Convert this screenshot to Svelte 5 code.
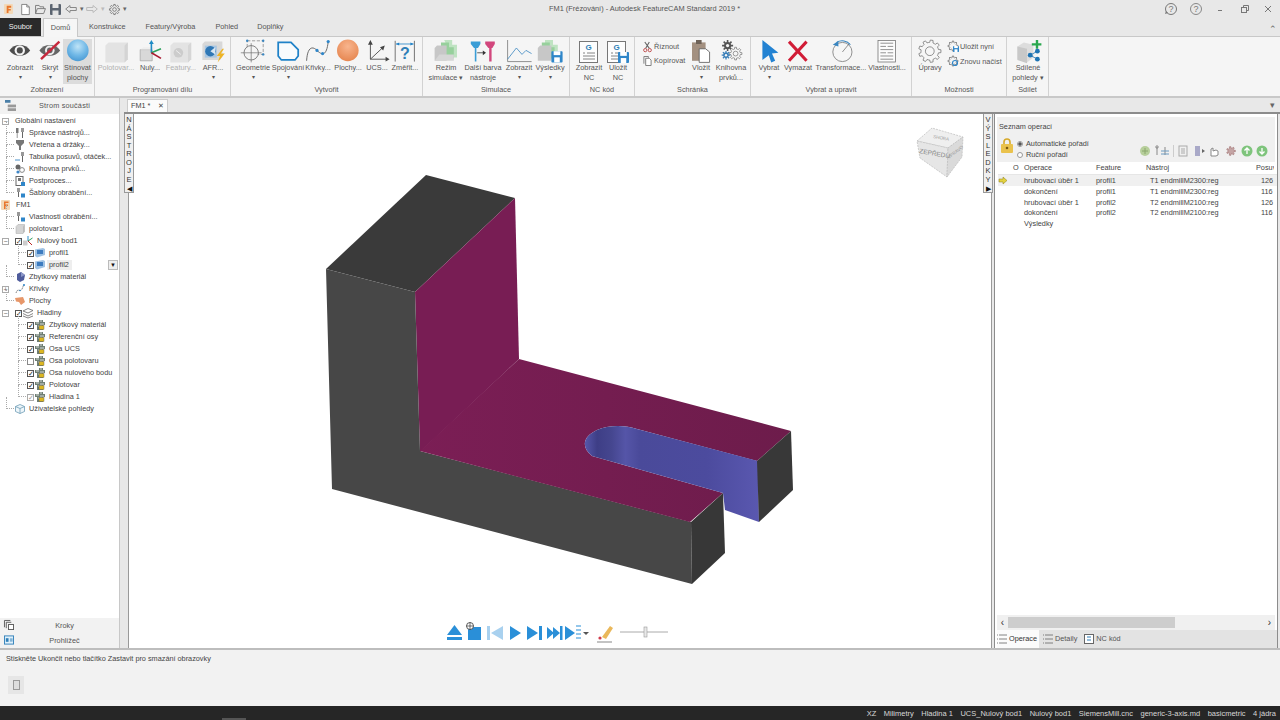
<script>
  function gear(cx, cy, ro, ri, n) {
    let d = '';
    const step = (Math.PI * 2) / n;
    for (let i = 0; i < n; i++) {
      const a = i * step;
      const pts = [[ri, a - step * 0.5], [ri, a - step * 0.28], [ro, a - step * 0.18], [ro, a + step * 0.18], [ri, a + step * 0.28]];
      for (const [r, t] of pts) {
        d += (d ? 'L' : 'M') + (cx + r * Math.cos(t)).toFixed(1) + ' ' + (cy + r * Math.sin(t)).toFixed(1);
      }
    }
    return d + 'Z';
  }

  const tree = [
    { kind: 'root', exp: '−', label: 'Globální nastavení' },
    { kind: 'child', icon: 'tool', label: 'Správce nástrojů...' },
    { kind: 'child', icon: 'spindle', label: 'Vřetena a držáky...' },
    { kind: 'child', icon: 'feed', label: 'Tabulka posuvů, otáček...' },
    { kind: 'child', icon: 'lib', label: 'Knihovna prvků...' },
    { kind: 'child', icon: 'post', label: 'Postproces...' },
    { kind: 'child', icon: 'tmpl', label: 'Šablony obrábění...' },
    { kind: 'fm', icon: 'fm', label: 'FM1' },
    { kind: 'child', icon: 'tmpl', label: 'Vlastnosti obrábění...' },
    { kind: 'child', icon: 'stock', label: 'polotovar1' },
    { kind: 'root', exp: '−', check: 'on', icon: 'zero', label: 'Nulový bod1' },
    { kind: 'sub', check: 'on', icon: 'feature', label: 'profil1' },
    { kind: 'sub', check: 'on', icon: 'feature', label: 'profil2', selected: true },
    { kind: 'child', icon: 'rest', label: 'Zbytkový materiál' },
    { kind: 'root', exp: '+', icon: 'curve', label: 'Křivky' },
    { kind: 'child', icon: 'surf', label: 'Plochy' },
    { kind: 'root', exp: '−', check: 'on', icon: 'layers', label: 'Hladiny' },
    { kind: 'sub', check: 'on', icon: 'layer', label: 'Zbytkový materiál' },
    { kind: 'sub', check: 'on', icon: 'layer', label: 'Referenční osy' },
    { kind: 'sub', check: 'on', icon: 'layer', label: 'Osa UCS' },
    { kind: 'sub', check: 'off', icon: 'layer', label: 'Osa polotovaru' },
    { kind: 'sub', check: 'on', icon: 'layer', label: 'Osa nulového bodu' },
    { kind: 'sub', check: 'on', icon: 'layer', label: 'Polotovar' },
    { kind: 'sub', check: 'dim', icon: 'layer', label: 'Hladina 1' },
    { kind: 'child', icon: 'views', label: 'Uživatelské pohledy' }
  ];

  const ops = [
    { op: 'hrubovací úběr 1', f: 'profil1', t: 'T1 endmillM2300:reg', p: '126', cur: true },
    { op: 'dokončení', f: 'profil1', t: 'T1 endmillM2300:reg', p: '116' },
    { op: 'hrubovací úběr 1', f: 'profil2', t: 'T2 endmillM2100:reg', p: '126' },
    { op: 'dokončení', f: 'profil2', t: 'T2 endmillM2100:reg', p: '116' },
    { op: 'Výsledky', f: '', t: '', p: '' }
  ];

  const status = ['XZ', 'Milimetry', 'Hladina 1', 'UCS_Nulový bod1', 'Nulový bod1', 'SiemensMill.cnc', 'generic-3-axis.md', 'basicmetric', '4 jádra'];
  const nastroje = 'NÁSTROJE'.split('');
  const vysledky = 'VÝSLEDKY'.split('');
</script>

{#snippet ticon(name)}
  <svg class="ti" viewBox="0 0 10 10">
    {#if name === 'tool'}
      <rect x="1" y="0" width="2.5" height="5" fill="#777" /><rect x="1.7" y="5" width="1" height="5" fill="#999" /><rect x="6" y="0" width="3" height="4" fill="#999" /><rect x="7" y="4" width="1" height="6" fill="#666" />
    {:else if name === 'spindle'}
      <path d="M1 0h8v3L6 6v4H4V6L1 3z" fill="#777" />
    {:else if name === 'feed'}
      <path d="M0 8h5" stroke="#4a90c8" /><rect x="6" y="0" width="3" height="4" fill="#999" /><rect x="7" y="4" width="1" height="6" fill="#666" />
    {:else if name === 'lib'}
      <circle cx="3" cy="3" r="2.5" fill="#666" /><circle cx="7" cy="6" r="2.4" fill="none" stroke="#888" /><circle cx="3" cy="8" r="1.6" fill="#3d85c6" />
    {:else if name === 'post'}
      <rect x="1" y="0.5" width="7" height="9" fill="#fff" stroke="#666" /><rect x="3" y="2" width="3" height="3" fill="#777" /><rect x="6" y="6" width="4" height="4" fill="#2f86c9" />
    {:else if name === 'tmpl'}
      <rect x="2" y="0" width="3" height="4" fill="#999" /><rect x="3" y="4" width="1" height="5" fill="#666" /><rect x="6" y="5.5" width="4" height="4" fill="#2f86c9" />
    {:else if name === 'fm'}
      <rect x="0" y="0" width="9" height="10" rx="1" fill="#f3d9b8" /><path d="M3 1.500h4.500v1.500H4.500v1.500H7V6H4.500v3H3z" fill="#e8762d" />
    {:else if name === 'stock'}
      <path d="M1 2.500 3 .5h6.500v7L8 9.500H1z" fill="#d4d4d4" stroke="#aaa" stroke-width=".5" /><path d="M8 2.500 9.500 .5v7L8 9.500z" fill="#bbb" />
    {:else if name === 'zero'}
      <path d="M0 4.500h4.500v5H0z" fill="#ccc" /><path d="M5 5V0" stroke="#2a8ac7" /><path d="M5 5 9.500 2" stroke="#2ca25f" /><path d="M5 5l4 4" stroke="#b22" />
    {:else if name === 'feature'}
      <path d="M0 1.500 8 0l2 1v6L2 9.500 0 8z" fill="#9fc2e4" /><path d="M2 2h6v4H2z" fill="#3d7cc0" />
    {:else if name === 'rest'}
      <path d="M2 2 6 0l4 3-1 5-4 2-3-2z" fill="#4f5c9c" /><path d="M6 0l4 3-4 2z" fill="#8c97c8" />
    {:else if name === 'curve'}
      <path d="M1 9C3 3 5 9 7 5S8 1 9 1" fill="none" stroke="#555" stroke-width=".7" stroke-dasharray="1.500 .5" /><circle cx="9" cy="1" r="1" fill="#2f86c9" /><circle cx="5" cy="6.500" r=".8" fill="#2f86c9" />
    {:else if name === 'surf'}
      <path d="M0 2 8 1l2 5-4 3-2-3-3-.5z" fill="#e7976a" />
    {:else if name === 'layers'}
      <path d="M0 3 5 .5 10 2.500 5 5zM0 5.500 5 8l5-2.500M0 8l5 2 5-2" fill="none" stroke="#666" stroke-width=".8" />
    {:else if name === 'layer'}
      <path d="M0 2h4V0h4v2h2v3H8v5H2V5H0z" fill="#6f7f74" /><path d="M1 3h3M5 1h2M5 4h4M3 6h4" stroke="#fff" stroke-width=".7" /><rect x="4" y="5.500" width="5" height="4" fill="#dcb722" stroke="#555" stroke-width=".4" />
    {:else if name === 'views'}
      <path d="M5 .5 9.500 2.500v5L5 9.500.5 7.500v-5z" fill="#eef6fa" stroke="#6c9cb5" stroke-width=".8" /><path d="M.5 2.500 5 4.500l4.500-2M5 4.500v5" fill="none" stroke="#6c9cb5" stroke-width=".8" />
    {/if}
  </svg>
{/snippet}

{#snippet floppy(x, y, s)}
  <g transform="translate({x} {y}) scale({s})">
    <rect width="10" height="10" rx=".8" fill="#2f86c9" /><rect x="2" y="0" width="6" height="3.500" fill="#fff" /><rect x="2.500" y="5.500" width="5" height="4.500" fill="#fff" />
  </g>
{/snippet}

{#snippet docG(x, y)}
  <g transform="translate({x} {y})">
    <rect x=".5" y=".5" width="18" height="21" fill="#fdfdfd" stroke="#777" /><text x="9.500" y="9" class="g">G</text><path d="M4 12h2M8 12h8M4 15h12M4 18h12" stroke="#666" stroke-width=".8" />
  </g>
{/snippet}

<div class="app">
  <header class="titlebar">
    <div class="qat">
      <svg class="q-logo" viewBox="0 0 10 11"><rect width="10" height="11" rx="1" fill="#f3d9b8" /><path d="M3 2h5v2H5v1.500h2.500v1.800H5V10H3z" fill="#e8762d" /></svg>
      <svg class="q-new" viewBox="0 0 10 13"><path d="M.5.5h6l3 3v9h-9z" fill="#fff" stroke="#777" /><path d="M6.500.5v3h3" fill="none" stroke="#777" /></svg>
      <svg class="q-open" viewBox="0 0 12 10"><path d="M.5 9.500v-9h4l1 1.500h4v2M.5 9.500 2.500 4h9l-2 5.500z" fill="none" stroke="#777" /></svg>
      <svg class="q-save" viewBox="0 0 11 11"><rect width="11" height="11" rx="1" fill="#5b6470" /><rect x="2.500" width="6" height="4" fill="#e4e4e4" /><rect x="2.500" y="6.500" width="6" height="4.500" fill="#e4e4e4" /></svg>
      <svg class="q-undo" viewBox="0 0 12 8"><path d="M5 .5.7 4 5 7.500V5.500h6.300v-3H5z" fill="none" stroke="#888" /></svg>
      <span class="q-drop">▾</span>
      <svg class="q-redo" viewBox="0 0 12 8"><path d="M7 .5 11.300 4 7 7.500V5.500H.7v-3H7z" fill="none" stroke="#bbb" /></svg>
      <span class="q-drop pale">▾</span>
      <svg class="q-gear" viewBox="0 0 12 12"><path d={gear(6, 6, 5.6, 4.2, 8)} fill="none" stroke="#666" stroke-width=".8" /><circle cx="6" cy="6" r="2" fill="none" stroke="#666" stroke-width=".8" /></svg>
      <span class="q-drop">▾</span>
    </div>
    <div class="title">FM1 (Frézování) - Autodesk FeatureCAM Standard 2019 *</div>
    <div class="winctl">
      <svg class="w-help" viewBox="0 0 12 12"><circle cx="6" cy="6" r="5.500" fill="none" stroke="#777" /><text x="6" y="9" class="hq">?</text><path d="M1 8l-1 3 3-1z" fill="#777" /></svg>
      <svg class="w-help" viewBox="0 0 12 12"><circle cx="6" cy="6" r="5.500" fill="none" stroke="#888" /><text x="6" y="9" class="hq">?</text></svg>
      <span class="w-min"></span>
      <svg class="w-res" viewBox="0 0 8 8"><rect x=".5" y="2.500" width="5" height="5" fill="#e8e8e8" stroke="#777" /><path d="M2.500 2.500v-2h5v5h-2" fill="none" stroke="#777" /></svg>
      <svg class="w-close" viewBox="0 0 8 8"><path d="M1 1l6 6M7 1 1 7" stroke="#777" /></svg>
    </div>
  </header>

  <nav class="tabs">
    <span class="tab file">Soubor</span>
    <span class="tab active">Domů</span>
    <span class="tab t-kon">Konstrukce</span>
    <span class="tab t-fea">Featury/Výroba</span>
    <span class="tab t-poh">Pohled</span>
    <span class="tab t-dop">Doplňky</span>
    <span class="collapse">⌃</span>
  </nav>

  <section class="ribbon">
    <div class="group g-view">
      <div class="items">
        <div class="it">
          <svg class="ic" viewBox="0 0 32 28"><path d="M3 13C9 4 23 4 29 13 23 22 9 22 3 13z" fill="#4d4d4d" /><circle cx="16" cy="13" r="6.500" fill="#f4f4f4" /><circle cx="16" cy="13" r="3.800" fill="#4d4d4d" /></svg>
          <span class="lb">Zobrazit</span><span class="ar">▾</span>
        </div>
        <div class="it">
          <svg class="ic" viewBox="0 0 32 28"><path d="M3 13C9 4 23 4 29 13 23 22 9 22 3 13z" fill="#666" /><circle cx="16" cy="13" r="6" fill="#eee" /><circle cx="16" cy="13" r="3.500" fill="#666" /><path d="M5 24 28 2" stroke="#c7283c" stroke-width="3" /></svg>
          <span class="lb">Skrýt</span><span class="ar">▾</span>
        </div>
        <div class="it sel">
          <svg class="ic" viewBox="0 0 32 28"><defs><radialGradient id="bl" cx=".5" cy=".32" r=".7"><stop offset="0" stop-color="#bfe4f7" /><stop offset=".6" stop-color="#6fb7e6" /><stop offset="1" stop-color="#4a9ad4" /></radialGradient><radialGradient id="or" cx=".5" cy=".32" r=".7"><stop offset="0" stop-color="#f8b58e" /><stop offset="1" stop-color="#e68650" /></radialGradient></defs><circle cx="16" cy="13" r="13.500" fill="url(#bl)" /></svg>
          <span class="lb">Stínovat</span><span class="lb">plochy</span>
        </div>
      </div>
      <div class="glabel">Zobrazení</div>
    </div>

    <div class="group g-prog">
      <div class="items">
        <div class="it dim">
          <svg class="ic" viewBox="0 0 32 28"><path d="M3 7l4-4h24v21l-4 4H3z" fill="#e3e3e3" /><path d="M27 7l4-4v21l-4 4z" fill="#d4d4d4" /></svg>
          <span class="lb">Polotovar...</span>
        </div>
        <div class="it">
          <svg class="ic" viewBox="0 0 32 28"><path d="M4 12h15v14H4z" fill="#d8d8d8" stroke="#aaa" /><path d="M4 12l4-3h14v3z" fill="#eee" /><path d="M18 16V3" stroke="#1e8ac5" stroke-width="2" /><path d="M15 5l3-5 3 5z" fill="#1e8ac5" /><path d="M18 16 30 11" stroke="#2ca25f" stroke-width="2" /><path d="M18 16l12 7" stroke="#a8182f" stroke-width="2" /></svg>
          <span class="lb">Nuly...</span>
        </div>
        <div class="it dim">
          <svg class="ic" viewBox="0 0 32 28"><path d="M3 7l4-4h22v21l-4 4H3z" fill="#e3e3e3" /><path d="M25 7l4-4v21l-4 4z" fill="#d6d6d6" /><circle cx="13" cy="16" r="6" fill="#ccc" /><path d="M10 13l6 5" stroke="#f5f5f5" /></svg>
          <span class="lb">Featury...</span>
        </div>
        <div class="it">
          <svg class="ic" viewBox="0 0 32 28"><path d="M3 5l3-3h22v19l-3 4H3z" fill="#d8d8d8" /><rect x="6" y="7" width="15" height="15" fill="#a8c6e2" /><circle cx="13" cy="14" r="6.500" fill="#2f77b5" /><path d="M13 14l6-5v9z" fill="#d8e6f2" /><path d="M28 11l-7 9h4l-3 8 9-11h-5l4-6z" fill="#eeb425" /></svg>
          <span class="lb">AFR...</span><span class="ar">▾</span>
        </div>
      </div>
      <div class="glabel">Programování dílu</div>
    </div>

    <div class="group g-make">
      <div class="items">
        <div class="it">
          <svg class="ic" viewBox="0 0 32 28"><rect x="9" y="1" width="20" height="17" fill="none" stroke="#888" stroke-dasharray="4 2" /><circle cx="14" cy="16" r="9" fill="#f4f4f4" stroke="#666" /><path d="M14 4v24M1 16h26" stroke="#666" stroke-width=".8" /><circle cx="9" cy="1" r="1.500" fill="#3a86c0" /><circle cx="29" cy="1" r="1.500" fill="#3a86c0" /><circle cx="29" cy="18" r="1.500" fill="#3a86c0" /></svg>
          <span class="lb">Geometrie</span><span class="ar">▾</span>
        </div>
        <div class="it">
          <svg class="ic" viewBox="0 0 32 28"><path d="M4 3h16l9 9v8l-4 5H8l-4-5z" fill="#f8fbfd" stroke="#1f82c8" stroke-width="2.200" /></svg>
          <span class="lb">Spojování</span><span class="ar">▾</span>
        </div>
        <div class="it">
          <svg class="ic" viewBox="0 0 32 28"><path d="M2 26C3 9 9 7 15 13s12 8 14-11" fill="none" stroke="#666" stroke-width="1.200" /><circle cx="15" cy="13" r="2" fill="#2f86c9" /><circle cx="29" cy="2" r="2" fill="#2f86c9" /><circle cx="22" cy="17" r="2" fill="#2f86c9" /></svg>
          <span class="lb">Křivky...</span>
        </div>
        <div class="it">
          <svg class="ic" viewBox="0 0 32 28"><circle cx="16" cy="13" r="13.500" fill="url(#or)" /></svg>
          <span class="lb">Plochy...</span>
        </div>
        <div class="it">
          <svg class="ic" viewBox="0 0 32 28"><path d="M8 24V4M8 24h21M8 24 24 9" stroke="#555" fill="none" stroke-width="1.200" /><path d="M5 6l3-6 3 6zM27 21l5 3-5 3zM20 9l6-2-2 6z" fill="#444" /></svg>
          <span class="lb">UCS...</span>
        </div>
        <div class="it">
          <svg class="ic" viewBox="0 0 32 28"><path d="M4 1v26M28 1v26" stroke="#555" /><path d="M5 5h22" stroke="#1f82c8" /><path d="M5 5l4-2v4zM27 5l-4-2v4z" fill="#1f82c8" /><text x="16" y="24" class="qm">?</text></svg>
          <span class="lb">Změřit...</span>
        </div>
      </div>
      <div class="glabel">Vytvořit</div>
    </div>

    <div class="group g-sim">
      <div class="items">
        <div class="it">
          <svg class="ic" viewBox="0 0 32 28"><path d="M14 0h10v6h6v16h-6z" fill="#bfe3c2" /><path d="M10 3h10v6h6v14H10z" fill="#97d09c" /><path d="M2 10l3-3h12v19H2z" fill="#c7c7c7" /><path d="M2 26 8 18h18v8z" fill="#d6d6d6" /></svg>
          <span class="lb">Režim</span><span class="lb">simulace ▾</span>
        </div>
        <div class="it">
          <svg class="ic" viewBox="0 0 32 28"><path d="M1 2h12v3l-3 5H8v17H6V10H5L1 5z" fill="#3a9dd6" /><path d="M19 2h12v3l-3 5h-1v17h-3V10h-1l-4-5z" fill="#d2477d" /><path d="M9 16h8" stroke="#333" /><path d="M16 13l4 3-4 3z" fill="#333" /></svg>
          <span class="lb">Další barva</span><span class="lb">nástroje</span>
        </div>
        <div class="it">
          <svg class="ic" viewBox="0 0 32 28"><path d="M2 0v27h30" fill="none" stroke="#777" /><path d="M2 24 13 10l7 8 5-5 7 4" fill="none" stroke="#3a86c0" /></svg>
          <span class="lb">Zobrazit</span><span class="ar">▾</span>
        </div>
        <div class="it">
          <svg class="ic" viewBox="0 0 32 28"><path d="M10 0h10v6h6v14H10z" fill="#bfe3c2" /><path d="M6 3h10v6h6v14H6z" fill="#97d09c" /><path d="M1 10l3-3h14v19H1z" fill="#c7c7c7" />{@render floppy(18, 14, 1.400)}</svg>
          <span class="lb">Výsledky</span><span class="ar">▾</span>
        </div>
      </div>
      <div class="glabel">Simulace</div>
    </div>

    <div class="group g-nc">
      <div class="items">
        <div class="it"><svg class="ic doc" viewBox="0 0 32 28">{@render docG(6, 1)}</svg><span class="lb">Zobrazit</span><span class="lb">NC</span></div>
        <div class="it"><svg class="ic doc" viewBox="0 0 32 28">{@render docG(5, 1)}{@render floppy(16, 12, 1.100)}</svg><span class="lb">Uložit</span><span class="lb">NC</span></div>
      </div>
      <div class="glabel">NC kód</div>
    </div>

    <div class="group g-clip">
      <div class="items">
        <div class="smalls">
          <div class="sm">
            <svg class="si" viewBox="0 0 10 11"><path d="M2 0l5 7M7 0 3 7" stroke="#666" stroke-width="1.200" /><circle cx="2.500" cy="9" r="1.800" fill="none" stroke="#b44" /><circle cx="7.500" cy="9" r="1.800" fill="none" stroke="#b44" /></svg>
            <span class="lb">Říznout</span>
          </div>
          <div class="sm">
            <svg class="si" viewBox="0 0 10 11"><path d="M1 8.500V.5h5v1.500" fill="none" stroke="#777" /><path d="M3 2.500h4l2 2v6H3z" fill="#fff" stroke="#777" /></svg>
            <span class="lb">Kopírovat</span>
          </div>
        </div>
        <div class="it">
          <svg class="ic" viewBox="0 0 32 28"><rect x="5" y="3" width="17" height="23" fill="#a39080" /><rect x="10" y="0" width="7" height="5" fill="#6e6258" /><path d="M14 11h8l5 4v13H14z" fill="#fff" stroke="#555" /></svg>
          <span class="lb">Vložit</span><span class="ar">▾</span>
        </div>
        <div class="it">
          <svg class="ic" viewBox="0 0 32 28"><path d={gear(12, 7, 7, 4.500, 8)} fill="#555" /><circle cx="12" cy="7" r="2" fill="#f5f5f5" /><path d={gear(22, 17, 8, 5.800, 8)} fill="#f5f5f5" stroke="#666" stroke-width=".8" /><circle cx="22" cy="17" r="3" fill="none" stroke="#666" stroke-width=".8" /><path d={gear(10, 19, 5.500, 3.600, 8)} fill="#3a7fb8" /><circle cx="10" cy="19" r="1.500" fill="#f5f5f5" /></svg>
          <span class="lb">Knihovna</span><span class="lb">prvků...</span>
        </div>
      </div>
      <div class="glabel">Schránka</div>
    </div>

    <div class="group g-sel">
      <div class="items">
        <div class="it">
          <svg class="ic" viewBox="0 0 32 28"><path d="M8 0 28 16l-8 1 4 9-5 2-3-9-8 6z" fill="#2282d2" /></svg>
          <span class="lb">Vybrat</span><span class="ar">▾</span>
        </div>
        <div class="it">
          <svg class="ic" viewBox="0 0 32 28"><path d="M5 2l22 24M27 2 5 26" stroke="#d11c36" stroke-width="3.800" /></svg>
          <span class="lb">Vymazat</span>
        </div>
        <div class="it">
          <svg class="ic" viewBox="0 0 32 28"><circle cx="18" cy="15" r="12" fill="#f6f6f6" stroke="#777" /><path d="M18 15 27 4" stroke="#777" /><path d="M11 3A13 13 0 0 1 28 6" fill="none" stroke="#3a86c0" stroke-width="1.300" /><path d="M6 6l7-5v7z" fill="#3a86c0" /></svg>
          <span class="lb">Transformace...</span>
        </div>
        <div class="it">
          <svg class="ic" viewBox="0 0 32 28"><rect x="5" y="0.500" width="22" height="27" fill="#fcfcfc" stroke="#777" /><path d="M8 4h16M8 8h7M17 8h7M8 12h16M8 16h7M17 16h7M8 20h16M8 24h16" stroke="#777" /></svg>
          <span class="lb">Vlastnosti...</span>
        </div>
      </div>
      <div class="glabel">Vybrat a upravit</div>
    </div>

    <div class="group g-opt">
      <div class="items">
        <div class="it">
          <svg class="ic" viewBox="0 0 32 28"><path d={gear(16, 14, 14, 11, 9)} fill="#f6f6f6" stroke="#777" /><circle cx="16" cy="14" r="5.500" fill="none" stroke="#777" /></svg>
          <span class="lb">Úpravy</span>
        </div>
        <div class="smalls opt">
          <div class="sm">
            <svg class="si2" viewBox="0 0 11 11"><path d={gear(5, 5, 5, 3.600, 8)} fill="#f4f4f4" stroke="#666" stroke-width=".7" />{@render floppy(5, 5, .6)}</svg>
            <span class="lb">Uložit nyní</span>
          </div>
          <div class="sm">
            <svg class="si2" viewBox="0 0 11 11"><path d={gear(5, 5, 5, 3.600, 8)} fill="#f4f4f4" stroke="#666" stroke-width=".7" /><circle cx="7" cy="7" r="2.500" fill="none" stroke="#2f86c9" stroke-width="1.200" /></svg>
            <span class="lb">Znovu načíst</span>
          </div>
        </div>
      </div>
      <div class="glabel">Možnosti</div>
    </div>

    <div class="group g-share">
      <div class="items">
        <div class="it">
          <svg class="ic" viewBox="0 0 32 28"><path d="M3 8l8-5 12 3v16l-8 6-12-4z" fill="#ddd" /><path d="M3 8l12 3v18l-12-4z" fill="#c8c8c8" /><path d="M21 4h5V0h3v4h4v3h-4v4h-3V7h-5z" fill="#2aa84f" /><circle cx="28" cy="14" r="3" fill="#1f74b4" /><circle cx="19" cy="19" r="3" fill="#1f74b4" /><circle cx="28" cy="24" r="3" fill="#1f74b4" /><path d="M28 14 19 19l9 5" stroke="#1f74b4" fill="none" /></svg>
          <span class="lb">Sdílené</span><span class="lb">pohledy ▾</span>
        </div>
      </div>
      <div class="glabel">Sdílet</div>
    </div>
  </section>

  <main class="body">
    <aside class="left">
      <div class="l-head">
        <svg class="l-hi" viewBox="0 0 12 12"><rect x="0" y="0" width="6" height="3" fill="#4a7fa8" /><rect x="3" y="5" width="9" height="3" fill="#999" /><rect x="3" y="9" width="9" height="3" fill="#999" /></svg>
        <span>Strom součásti</span>
      </div>
      <div class="tree">
        {#each tree as r}
          <div class="row {r.kind}">
            {#if r.kind !== 'root' && r.kind !== 'fm'}<span class="conn"></span>{/if}
            {#if r.exp}<span class="exp">{r.exp}</span>{/if}
            {#if r.check}<span class="chk {r.check}">{r.check === 'off' ? '' : '✓'}</span>{/if}
            {#if r.icon}{@render ticon(r.icon)}{/if}
            <span class="txt" class:selected={r.selected}>{r.label}</span>
            {#if r.selected}<span class="dd">▼</span>{/if}
          </div>
        {/each}
      </div>
      <div class="l-foot">
        <div class="lf-row">
          <svg class="lf-i" viewBox="0 0 11 11"><path d="M.5 8V.5H7M2.500 9V2.500H8" fill="none" stroke="#555" /><rect x="5" y="5" width="5.500" height="5.500" fill="#fff" stroke="#555" /></svg>
          <span>Kroky</span>
        </div>
        <div class="lf-row">
          <svg class="lf-i" viewBox="0 0 11 10"><rect x=".5" y=".5" width="10" height="9" fill="#dff0fb" stroke="#2f7fb8" /><rect x="2" y="3" width="3" height="4" fill="#2f7fb8" /><path d="M6.500 4h3M6.500 6h3" stroke="#2f7fb8" /></svg>
          <span>Prohlížeč</span>
        </div>
      </div>
    </aside>

    <div class="right-col">
      <div class="docbar">
        <div class="doctab"><span>FM1 *</span><span class="x">✕</span></div>
        <span class="docmenu">▾</span>
      </div>
      <div class="work">
        <div class="canvas">
          <svg class="model" viewBox="128 114 864 534">
            <defs>
              <linearGradient id="slot" x1="583" y1="0" x2="760" y2="0" gradientUnits="userSpaceOnUse">
                <stop offset="0" stop-color="#5a5bb0" />
                <stop offset=".08" stop-color="#3e3e86" />
                <stop offset=".16" stop-color="#45468f" />
                <stop offset=".24" stop-color="#5555a8" />
                <stop offset=".32" stop-color="#4a4a9a" />
                <stop offset=".7" stop-color="#4c4b9e" />
                <stop offset="1" stop-color="#5a58b0" />
              </linearGradient>
              <linearGradient id="floor" x1="420" y1="0" x2="790" y2="0" gradientUnits="userSpaceOnUse">
                <stop offset="0" stop-color="#7b1e55" />
                <stop offset="1" stop-color="#6d1c4b" />
              </linearGradient>
            </defs>
            <path d="M326 269 426 175 515 198 415 292z" fill="#3a3a3a" />
            <path d="M515 198 519 359 420 452 415 292z" fill="#781d54" />
            <path d="M326 269 415 292 420 451 691 522 692 584 332 489z" fill="#474747" />
            <path d="M519 359 791 431 757 461 637 429C625 425 608 425 597 430 584 436 580 446 592 456L723 493 690 522 420 451z" fill="url(#floor)" />
            <path d="M637 429 758 461 759 522 725 510 723 493 592 456C580 446 584 436 597 430 608 425 625 425 637 429z" fill="url(#slot)" />
            <path d="M691 522 723 493 725 553 692 584z" fill="#373737" />
            <path d="M757 461 791 431 793 490 759 522z" fill="#383838" />
          </svg>

          <div class="cube">
            <svg viewBox="0 0 50 54">
              <path d="M1 14 16 1 47 10 32 21z" fill="#efefef" stroke="#bbb" stroke-dasharray="2 1" stroke-width=".7" />
              <path d="M1 14 32 21 31 50 4 31z" fill="#e6e6e6" stroke="#bbb" stroke-dasharray="2 1" stroke-width=".7" />
              <path d="M32 21 47 10 46 30 31 50z" fill="#dadada" stroke="#bbb" stroke-dasharray="2 1" stroke-width=".7" />
              <text x="3" y="26" class="cube-t" transform="rotate(10 3 26)">ZEPŘEDU</text>
              <text x="17" y="11" class="cube-s" transform="rotate(10 17 11)">SHORA</text>
              <text x="33" y="32" class="cube-s" transform="rotate(-38 33 32)">VPRAVO</text>
            </svg>
          </div>

          <div class="player">
            <svg viewBox="0 0 225 20">
              <path d="M2 12 9.500 2l7.500 10z" fill="#2a8fd8" /><rect x="2" y="14" width="15" height="3" fill="#2a8fd8" />
              <rect x="23" y="4" width="13" height="13" fill="#2a8fd8" />
              <circle cx="25" cy="3" r="3.500" fill="#fff" stroke="#333" stroke-width=".8" /><path d="M25-.5v7M21.500 3h7" stroke="#333" stroke-width=".7" />
              <rect x="42" y="3" width="3" height="14" fill="#a9d1ef" /><path d="M58 3v14l-12-7z" fill="#a9d1ef" />
              <path d="M65 3v14l11-7z" fill="#2a8fd8" />
              <path d="M82 3v14l11-7z" fill="#2a8fd8" /><rect x="94" y="3" width="3" height="14" fill="#2a8fd8" />
              <path d="M102 4v12l7-6zM108 4v12l7-6z" fill="#2a8fd8" /><rect x="115" y="3" width="2.500" height="14" fill="#2a8fd8" />
              <path d="M120 3v14l10-7z" fill="#2a8fd8" /><path d="M131 3h5M131 7h5M131 11h5M131 15h5" stroke="#2a8fd8" stroke-width="1.200" />
              <path d="M138 9h6l-3 3z" fill="#555" />
              <path d="M157 14 165 3l3 2-7 11z" fill="#eab85b" /><circle cx="155" cy="15" r="1.600" fill="#d03c4c" /><path d="M152 19h15" stroke="#555" stroke-width=".7" />
              <path d="M175 9h48" stroke="#aaa" stroke-width="1" /><rect x="199" y="4" width="3" height="10" fill="#e8e8e8" stroke="#999" stroke-width=".6" />
            </svg>
          </div>

          <div class="strip s-left">
            {#each nastroje as c}<span>{c}</span>{/each}
            <i>◀</i>
          </div>
          <div class="strip s-right">
            {#each vysledky as c}<span>{c}</span>{/each}
            <i>▶</i>
          </div>
        </div>

        <div class="panel">
          <div class="p-head">
            <div class="p-title">Seznam operací</div>
            <div class="p-tools">
              <svg class="lock" viewBox="0 0 12 15"><path d="M3 7V4a3 3 0 0 1 6 0v3" fill="none" stroke="#d6a92a" stroke-width="1.600" /><rect x="0" y="6" width="12" height="9" rx="1" fill="#eac24c" /><circle cx="6" cy="10" r="1.300" fill="#7a5a10" /></svg>
              <div class="radios">
                <label><span class="radio on"></span>Automatické pořadí</label>
                <label><span class="radio"></span>Ruční pořadí</label>
              </div>
              <svg class="tools" viewBox="0 0 128 12">
                <circle cx="6" cy="6" r="5" fill="#b7cf9b" /><path d="M3 6h6M6 3v6" stroke="#8aa66c" />
                <path d="M18 2v8M26 2v8" stroke="#888" /><circle cx="18" cy="2" r="1.200" fill="none" stroke="#888" /><path d="M22 6h8M22 9h8" stroke="#6a9ac0" />
                <path d="M34.500 0v12" stroke="#ccc" />
                <rect x="40" y="1" width="8" height="10" fill="none" stroke="#aaa" /><path d="M42 4h4M42 6h4M42 8h4" stroke="#aaa" />
                <rect x="56" y="1" width="5" height="10" fill="#a9a9c8" /><path d="M63 4v4l3-2z" fill="#666" />
                <path d="M72 11V4l2-1v3l3-1 2 1v4l-2 1z" fill="#fff" stroke="#888" />
                <path d={gear(92, 6, 4.500, 3, 7)} fill="#c4a4a4" stroke="#966" stroke-width=".5" />
                <circle cx="108" cy="6" r="5.500" fill="#7ec47c" /><path d="M108 9V3M105.500 5.500 108 3l2.500 2.500" fill="none" stroke="#fff" stroke-width="1.300" />
                <circle cx="123" cy="6" r="5.500" fill="#7ec47c" /><path d="M123 3v6M120.500 6.500 123 9l2.500-2.500" fill="none" stroke="#fff" stroke-width="1.300" />
              </svg>
            </div>
          </div>
          <div class="table">
            <div class="t-row t-head">
              <span class="c-o">O</span><span class="c-op">Operace</span><span class="c-f">Feature</span><span class="c-t head">Nástroj</span><span class="c-p head">Posuv</span>
            </div>
            {#each ops as o}
              <div class="t-row" class:cur={o.cur}>
                <span class="c-o">{#if o.cur}<svg class="cur-a" viewBox="0 0 8 7"><path d="M0 2h4V0l4 3.500L4 7V5H0z" fill="#e3d23f" stroke="#8a7a18" stroke-width=".5" /></svg>{/if}</span>
                <span class="c-op">{o.op}</span><span class="c-f">{o.f}</span><span class="c-t">{o.t}</span><span class="c-p">{o.p}</span>
              </div>
            {/each}
          </div>
          <div class="sbar">
            <span class="sb-a">‹</span>
            <div class="sb-track"><div class="sb-thumb"></div></div>
            <span class="sb-a">›</span>
          </div>
          <div class="p-tabs">
            <span class="p-tab on">
              <svg class="pt-i" viewBox="0 0 10 10"><path d="M0 1h1M0 5h1M0 9h1M2 1h8M2 5h8M2 9h8" stroke="#666" stroke-width=".8" /></svg>Operace
            </span>
            <span class="p-tab">
              <svg class="pt-i" viewBox="0 0 10 10"><path d="M0 1h1M0 5h1M0 9h1M2 1h8M2 5h8M2 9h8" stroke="#666" stroke-width=".8" /></svg>Detaily
            </span>
            <span class="p-tab">
              <svg class="pt-i" viewBox="0 0 10 10"><rect x=".5" y=".5" width="9" height="9" fill="#fff" stroke="#666" /><path d="M3 3h4M3 6h4" stroke="#2f7fb8" /></svg>NC kód
            </span>
          </div>
        </div>
      </div>
    </div>
  </main>

  <section class="msg">
    <div class="msg-text">Stiskněte Ukončit nebo tlačítko Zastavit pro smazání obrazovky</div>
    <div class="msg-btn"><span></span></div>
  </section>

  <footer class="status">
    <span class="task"></span>
    {#each status as s}<span>{s}</span>{/each}
  </footer>
</div>

<style>
  :global(body) { margin: 0; background: #f2f2f2; }
  .app {
    width: 1280px; height: 720px; display: flex; flex-direction: column; overflow: hidden;
    font: 7.3px/10px "Liberation Sans", Arial, sans-serif; color: #444;
  }
  svg { display: block; overflow: visible; }

  .titlebar { height: 18px; background: #e8e8e8; display: flex; align-items: center; position: relative; flex: none; }
  .qat { display: flex; align-items: center; padding-left: 4px; }
  .q-logo { width: 9px; height: 10px; margin-right: 8px; }
  .q-new { width: 9px; height: 11px; margin-right: 5px; }
  .q-open { width: 11px; height: 9px; margin-right: 4px; }
  .q-save { width: 11px; height: 11px; margin-right: 4px; }
  .q-undo { width: 12px; height: 8px; }
  .q-redo { width: 12px; height: 8px; }
  .q-gear { width: 11px; height: 11px; margin-left: 2px; }
  .q-drop { width: 9px; text-align: center; font-size: 7px; color: #666; }
  .q-drop.pale { color: #bbb; }
  .title { position: absolute; left: 549px; top: 4px; white-space: nowrap; color: #555; font-size: 7.4px; }
  .winctl { margin-left: auto; display: flex; align-items: center; padding-right: 8px; }
  .w-help { width: 12px; height: 12px; margin-right: 13px; }
  .hq { font-size: 9px; text-anchor: middle; fill: #777; }
  .w-min { width: 4px; height: 1px; background: #777; margin: 3px 19px 0 3px; }
  .w-res { width: 8px; height: 8px; margin-right: 15px; }
  .w-close { width: 8px; height: 8px; }

  .tabs { height: 18px; background: #e8e8e8; position: relative; flex: none; display: flex; }
  .tab { white-space: nowrap; line-height: 18px; color: #555; }
  .tab.file { width: 41px; background: #2a2a2a; color: #eee; text-align: center; }
  .tab.active {
    width: 35px; margin-left: 2px; text-align: center; background: #f6f6f6;
    border: 1px solid #c8c8c8; border-bottom: 0; box-sizing: border-box; height: 19px; z-index: 1;
  }
  .t-kon { margin-left: 11px; }
  .t-fea { margin-left: 20px; }
  .t-poh { margin-left: 20px; }
  .t-dop { margin-left: 19px; }
  .collapse { position: absolute; right: 3px; top: 6px; font-size: 9px; color: #666; }

  .ribbon {
    height: 62px; flex: none; box-sizing: border-box; background: #f5f5f5; display: flex;
    border-top: 1px solid #c8c8c8; border-bottom: 2px solid #c8c8c8;
  }
  .group { display: flex; flex-direction: column; border-right: 1px solid #d2d2d2; box-sizing: border-box; }
  .items { flex: 1; display: grid; padding-top: 2px; min-height: 0; }
  .glabel { height: 12px; line-height: 11px; text-align: center; color: #555; white-space: nowrap; }
  .g-view { width: 95px; }
  .g-view .items { grid-template-columns: 34px 26px 29px; padding-left: 3px; }
  .g-prog { width: 136px; }
  .g-prog .items { grid-template-columns: 34px 34px 28px 36px; padding-left: 4px; }
  .g-make { width: 192px; }
  .g-make .items { grid-template-columns: 36px 34px 26px 34px 24px 32px; padding-left: 4px; }
  .g-sim { width: 147px; }
  .g-sim .items { grid-template-columns: 38px 36px 36px 26px; padding-left: 4px; }
  .g-nc { width: 65px; }
  .g-nc .items { grid-template-columns: 28px 30px; padding-left: 5px; }
  .g-clip { width: 116px; }
  .g-clip .items { grid-template-columns: 45px 32px 28px; padding-left: 5px; }
  .g-sel { width: 161px; }
  .g-sel .items { grid-template-columns: 28px 30px 56px 36px; padding-left: 4px; }
  .g-opt { width: 95px; }
  .g-opt .items { grid-template-columns: 28px 62px; padding-left: 4px; }
  .g-share { width: 42px; }
  .g-share .items { grid-template-columns: 34px; padding-left: 4px; }

  .it { display: flex; flex-direction: column; align-items: center; min-width: 0; }
  .it.sel { background: #dcdcdc; }
  .ic { width: 25.6px; height: 22.4px; flex: none; margin: 1px 0 1px; }
  .ic.doc { width: 32px; height: 28px; margin: 1px 0 -4.6px; }
  .lb { white-space: nowrap; line-height: 10px; color: #555; }
  .dim .lb { color: #b0b0b0; }
  .ar { font-size: 6px; line-height: 8px; color: #555; }
  .g { font: bold 8px "Liberation Sans", sans-serif; fill: #2f7fb8; text-anchor: middle; }
  .qm { font: bold 20px "Liberation Sans", sans-serif; fill: #2f7fb8; text-anchor: middle; }

  .smalls { display: flex; flex-direction: column; gap: 3px; padding-top: 2px; }
  .smalls.opt { margin-left: 4px; gap: 4px; }
  .sm { display: flex; align-items: center; height: 11px; gap: 2px; }
  .opt .sm { gap: 1px; }
  .si { width: 9px; height: 10px; flex: none; margin-left: 3px; }
  .si2 { width: 11px; height: 11px; flex: none; }

  .body { flex: none; height: 552px; display: flex; background: #e6e6e6; border-bottom: 2px solid #bdbdbd; box-sizing: border-box; }
  .left { width: 120px; flex: none; box-sizing: border-box; display: flex; flex-direction: column; background: #fff; border-right: 1px solid #c8c8c8; }
  .l-head { height: 16px; flex: none; background: #f2f2f2; display: flex; align-items: center; position: relative; }
  .l-head span { width: 100%; text-align: center; padding-left: 10px; box-sizing: border-box; color: #555; letter-spacing: .2px; }
  .l-hi { position: absolute; left: 5px; top: 2px; width: 11px; height: 11px; }
  .tree { flex: 1; padding-top: 1px; min-height: 0; }
  .row { height: 12px; display: flex; align-items: center; position: relative; white-space: nowrap; }
  .row.child { padding-left: 15px; }
  .row.sub { padding-left: 27px; }
  .row.fm { padding-left: 1px; }
  .row.fm .ti { margin-right: 5px; }
  .conn { position: absolute; left: 6px; top: -6px; width: 8px; height: 12px; border-left: 1px dotted #aaa; border-bottom: 1px dotted #aaa; box-sizing: border-box; }
  .row.sub .conn { left: 18px; }
  .exp {
    width: 7px; height: 7px; margin: 0 6px 0 2px; box-sizing: border-box; border: 1px solid #aaa; background: #fff;
    font-size: 7px; line-height: 5px; text-align: center; color: #666; flex: none;
  }
  .chk {
    width: 7px; height: 7px; margin-right: 1px; box-sizing: border-box; border: 1px solid #555; background: #fff;
    font-size: 7px; line-height: 5px; text-align: center; color: #222; flex: none; overflow: hidden;
  }
  .chk.dim { border-color: #aaa; color: #999; }
  .chk.off { border-color: #888; }
  .ti { width: 10px; height: 10px; margin-right: 4px; flex: none; }
  .txt { color: #444; }
  .txt.selected { background: #eee; margin-left: -2px; padding: 0 3px 0 2px; }
  .dd {
    position: absolute; left: 108px; top: 1px; width: 10px; height: 10px; box-sizing: border-box; border: 1px solid #bbb; background: #eee;
    font-size: 6px; line-height: 8px; text-align: center; color: #111;
  }
  .l-foot { flex: none; background: #f2f2f2; }
  .lf-row { height: 15px; display: flex; align-items: center; position: relative; }
  .lf-row span { width: 100%; text-align: center; padding-left: 10px; box-sizing: border-box; color: #555; }
  .lf-i { position: absolute; left: 4px; top: 2px; width: 10px; height: 10px; }

  .right-col { flex: 1; min-width: 0; display: flex; flex-direction: column; padding-left: 4px; background: #e8e8e8; }
  .docbar { height: 14px; flex: none; display: flex; align-items: flex-end; padding-left: 3px; position: relative; }
  .doctab {
    width: 41px; height: 13px; box-sizing: border-box; background: #fbfbfb; border: 1px solid #ccc; border-bottom: 0;
    display: flex; align-items: center; justify-content: space-between; padding: 0 3px 0 3px; color: #444;
  }
  .x { font-size: 7px; }
  .docmenu { position: absolute; right: 5px; top: 2px; font-size: 9px; color: #666; }
  .work { flex: 1; min-height: 0; display: flex; border-top: 2px solid #8c8c8c; background: #e8e8e8; padding-right: 2px; }
  .canvas { margin-left: 4px; width: 864px; flex: none; background: #fff; position: relative; border: 1px solid #999; border-top: 0; border-bottom: 0; box-sizing: border-box; }
  .model { position: absolute; left: -1px; top: 0; width: 864px; height: 534px; }
  .cube { position: absolute; left: 787px; top: 13px; width: 50px; height: 54px; }
  .cube-t { font: 6.5px "Liberation Sans", sans-serif; fill: #888; }
  .cube-s { font: 4.500px "Liberation Sans", sans-serif; fill: #999; }
  .player { position: absolute; left: 316px; top: 509px; width: 225px; height: 20px; }
  .strip {
    position: absolute; top: 0; width: 10px; height: 79px; background: #f0f0f0; border: 1px solid #999; box-sizing: border-box;
    display: flex; flex-direction: column; align-items: center; font-size: 7.5px; line-height: 8.5px; color: #333; padding-top: 2px; border-top: 0;
  }
  .strip i { font-style: normal; font-size: 7px; line-height: 9px; color: #111; }
  .s-left { left: -5px; }
  .s-right { right: -2px; }

  .panel { flex: 1; min-width: 0; margin-left: 2px; background: #fff; border: 1px solid #8c8c8c; border-top: 0; border-bottom: 0; display: flex; flex-direction: column; box-sizing: border-box; overflow: hidden; }
  .p-head { height: 45px; flex: none; background: #f0f0f0; margin: 3px 2px 0; }
  .p-title { padding: 5px 0 0 2px; color: #444; }
  .p-tools { display: flex; margin-top: 6px; padding-left: 4px; position: relative; }
  .lock { width: 12px; height: 15px; margin-right: 4px; }
  .radios { display: flex; flex-direction: column; }
  .radios label { display: flex; align-items: center; gap: 3px; height: 11px; color: #444; }
  .radio { width: 6px; height: 6px; border: 1px solid #999; border-radius: 50%; background: #fff; box-sizing: border-box; }
  .radio.on { background: radial-gradient(#555 0 1.500px, #fff 1.800px); }
  .tools { position: absolute; left: 142px; top: 7px; width: 128px; height: 12px; }
  .table { flex: 1; min-height: 0; margin: 0 0 0 3px; }
  .t-row { height: 10.75px; display: flex; line-height: 11px; white-space: nowrap; color: #444; overflow: hidden; }
  .t-head { height: 12px; line-height: 12px; border-bottom: 1px solid #e6e6e6; }
  .t-row.cur { background: #f0f0f0; }
  .c-o { width: 26px; flex: none; padding-left: 15px; box-sizing: border-box; position: relative; }
  .cur-a { position: absolute; left: 1px; top: 2px; width: 8px; height: 7px; }
  .c-op { width: 72px; flex: none; }
  .c-f { width: 50px; flex: none; }
  .c-t { width: 110px; flex: none; padding-left: 4px; box-sizing: border-box; }
  .c-t.head { padding-left: 0; }
  .c-p { width: 18px; flex: none; padding-left: 5px; box-sizing: border-box; overflow: hidden; }
  .c-p.head { padding-left: 0; }
  .sbar { height: 15px; flex: none; display: flex; align-items: center; background: #f0f0f0; margin: 0 2px; }
  .sb-a { width: 11px; text-align: center; font-size: 10px; color: #333; flex: none; }
  .sb-track { flex: 1; height: 100%; display: flex; align-items: center; }
  .sb-thumb { width: 167px; height: 11px; background: #cdcdcd; }
  .p-tabs { height: 18px; flex: none; background: #e3e3e3; display: flex; align-items: center; margin: 0 0 0 2px; }
  .p-tab { display: flex; align-items: center; gap: 2px; height: 100%; padding: 0 6px 0 1px; color: #555; white-space: nowrap; }
  .p-tab.on { background: #fbfbfb; width: 42px; box-sizing: border-box; color: #333; padding: 0; margin-right: 3px; }
  .pt-i { width: 10px; height: 10px; flex: none; }

  .msg { flex: 1; background: #f2f2f2; min-height: 0; }
  .msg-text { padding: 4px 0 0 6px; color: #444; }
  .msg-btn { margin: 12px 0 0 8px; width: 16px; height: 18px; background: #e6e6e6; display: flex; align-items: center; justify-content: center; }
  .msg-btn span { width: 7px; height: 10px; border: 1px solid #999; box-sizing: border-box; background: #ddd; }

  .status {
    height: 14px; flex: none; box-sizing: border-box; padding: 1px 4px 0 0; background: #262626; display: flex; justify-content: flex-end; align-items: center; gap: 7.5px;
    color: #d8d8d8; font-size: 7.5px; position: relative; white-space: nowrap;
  }
  .task { position: absolute; left: 222px; bottom: 0; width: 24px; height: 2px; background: #555; }
</style>
